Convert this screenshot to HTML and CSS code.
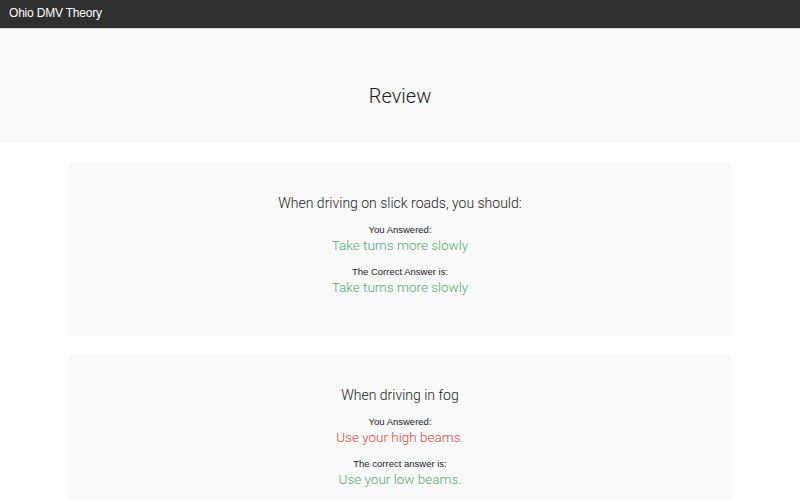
FILE: index.html
```html
<!DOCTYPE html>
<html>
<head>
<meta charset="utf-8">
<link rel="stylesheet" href="styles.css">
</head>
<body>
<nav class="navbar"><span class="brand">Ohio DMV Theory</span></nav>
<header class="jumbo"><h1>Review</h1></header>
<main class="list">
  <section class="card">
    <h2 class="question">When driving on slick roads, you should:</h2>
    <div class="label">You Answered:</div>
    <div class="answer right">Take turns more slowly</div>
    <div class="label">The Correct Answer is:</div>
    <div class="answer right">Take turns more slowly</div>
  </section>
  <section class="card">
    <h2 class="question">When driving in fog</h2>
    <div class="label">You Answered:</div>
    <div class="answer wrong">Use your high beams.</div>
    <div class="label">The correct answer is:</div>
    <div class="answer right">Use your low beams.</div>
  </section>
</main>
</body>
</html>
```
FILE: styles.css
```css
* { box-sizing: border-box; }
html, body { margin: 0; padding: 0; }
body {
  font-family: "Liberation Sans", Arial, sans-serif;
  color: #222;
  background: #fff;
}
.navbar {
  height: 29px;
  background: #2f2f2f;
  border-bottom: 1px solid #d6d6d6;
  display: flex;
  align-items: center;
  padding: 0 9px 2px;
}
.brand {
  color: #fff;
  font-size: 12px;
  letter-spacing: -0.2px;
}
.jumbo {
  background: #f8f8f8;
  height: 114px;
  display: flex;
  align-items: center;
  justify-content: center;
  padding-top: 20px;
}
.jumbo h1 {
  margin: 0;
  font-family: "Roboto", sans-serif;
  font-weight: 300;
  font-size: 20px;
  color: #222;
}
.list {
  padding: 19px 68px;
  display: flex;
  flex-direction: column;
  gap: 18px;
}
.card {
  background: #f9f9f9;
  height: 174px;
  display: flex;
  flex-direction: column;
  align-items: center;
  padding-top: 32px;
}
.question {
  margin: 0 0 12px;
  font-family: "Roboto", sans-serif;
  font-weight: 300;
  font-size: 14px;
  line-height: 18px;
  color: #222;
}
.label {
  font-size: 9.5px;
  line-height: 12px;
  color: #222;
}
.answer {
  font-family: "Roboto", sans-serif;
  font-weight: 300;
  font-size: 13.5px;
  line-height: 18px;
  margin-bottom: 12px;
}
.right { color: #4fae6d; }
.wrong { color: #e2473b; }
```
